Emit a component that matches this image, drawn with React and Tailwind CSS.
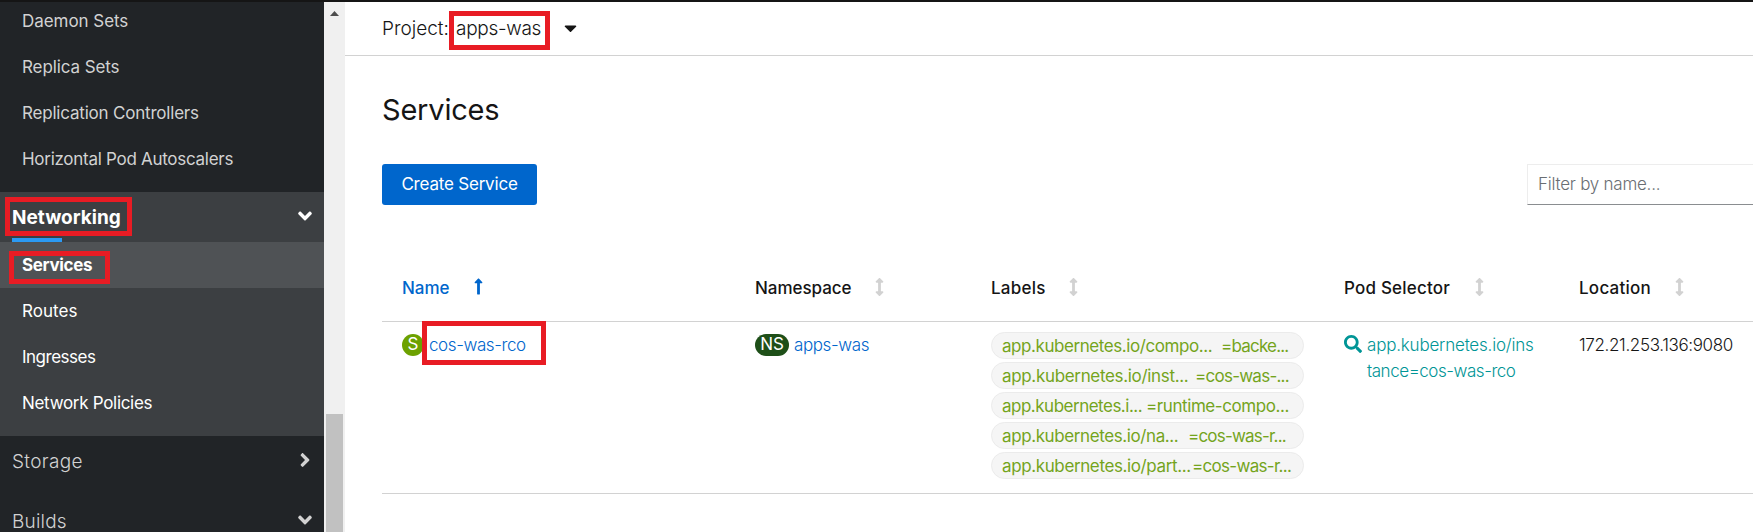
import React from "react";
import { FaAngleDown, FaAngleRight, FaArrowsAltV, FaCaretDown, FaLongArrowAltUp, FaSearch } from "react-icons/fa";

const highlight = "pointer-events-none absolute border-5 border-[#e81c24]";

function Sidebar() {
  return (
    <nav className="flex w-[324px] shrink-0 flex-col overflow-hidden bg-[#212427] text-[17px] text-[#d2d2d2]">
      <ul className="h-[190px] shrink-0 pl-[22px]">
        <li className="flex h-[42px] items-center pb-0.5 tracking-[-0.05px]">Daemon Sets</li>
        <li className="flex h-[46px] items-center pt-0.5 tracking-[-0.1px]">Replica Sets</li>
        <li className="flex h-[46px] items-center pt-0.5 tracking-[-0.2px]">Replication Controllers</li>
        <li className="flex h-[46px] items-center pt-0.5 tracking-[-0.28px]">Horizontal Pod Autoscalers</li>
      </ul>
      <section className="h-[244px] shrink-0 bg-[#3c3f42] text-white">
        <div className="relative flex h-[50px] items-center justify-between pr-3 pl-3 text-[19px] font-bold">
          <span className="pt-0.5">Networking</span>
          <FaAngleDown className="mb-0.5 h-[22px] w-[14px]" />
          <span className="absolute bottom-0 left-3 h-1 w-[50px] bg-[#2b9af3]" />
          <span className={`${highlight} top-[5px] left-[5px] h-[39px] w-[127px]`} />
        </div>
        <ul>
          <li className="relative flex h-[46px] items-center bg-[#4f5255] pt-0.5 pl-[22px] font-bold tracking-[-0.35px]">
            Services
            <span className={`${highlight} top-[9px] left-[9px] h-[33px] w-[101px]`} />
          </li>
          <li className="flex h-[46px] items-center pt-0.5 pl-[22px] tracking-[0.05px]">Routes</li>
          <li className="flex h-[46px] items-center pt-0.5 pl-[22px] tracking-[-0.5px]">Ingresses</li>
          <li className="flex h-[46px] items-center pt-0.5 pl-[22px] tracking-[-0.3px]">Network Policies</li>
        </ul>
      </section>
      <div className="flex h-[50px] shrink-0 items-center justify-between pr-3 pl-3 text-[19px] font-light">
        <span className="pt-0.5 tracking-[0.35px]">Storage</span>
        <FaAngleRight className="mb-0.5 h-[22px] w-[14px]" />
      </div>
      <div className="mt-2.5 flex h-[50px] shrink-0 items-center justify-between pr-3 pl-3 text-[19px] font-light">
        <span className="pt-0.5 tracking-[0.2px]">Builds</span>
        <FaAngleDown className="mb-0.5 h-[22px] w-[14px]" />
      </div>
    </nav>
  );
}

function Scrollbar() {
  return (
    <div className="flex w-[21px] shrink-0 flex-col items-center bg-[#f0f0f0] pt-[9px]">
      <svg className="h-[5px] w-[9px]" viewBox="0 0 9 5">
        <path d="M4.5 0 9 5H0z" fill="#4d4d4d" />
      </svg>
      <div className="mt-[398px] w-[17px] flex-1 bg-[#c1c1c1]" />
    </div>
  );
}

function SortIcon() {
  return <FaArrowsAltV className="mb-1 h-[18px] w-[9px] text-[#d2d2d2]" />;
}

const labels = [
  { k: "app.kubernetes.io/compo...", v: "=backe...", kc: "w-[219px] tracking-[-0.43px]", vc: "tracking-[-0.8px]" },
  { k: "app.kubernetes.io/inst...", v: "=cos-was-...", kc: "w-[193px] tracking-[-0.33px]", vc: "tracking-[-0.75px]" },
  { k: "app.kubernetes.i...", v: "=runtime-compo...", kc: "w-[144px] tracking-[-0.5px]", vc: "tracking-[-0.42px]" },
  { k: "app.kubernetes.io/na...", v: "=cos-was-r...", kc: "w-[186px] tracking-[-0.4px]", vc: "tracking-[-0.8px]" },
  { k: "app.kubernetes.io/part...", v: "=cos-was-r...", kc: "w-[190px] tracking-[-0.38px]", vc: "tracking-[-0.7px]" },
];

const columns = "grid grid-cols-[353px_236px_353px_235px_174px] pl-5";

function ServicesTable() {
  return (
    <div className="mt-[50px] text-[17px]">
      <div className={`${columns} h-[67px] border-b border-[#d2d2d2] pt-px font-medium text-[#151515]`}>
        <div className="flex items-center gap-[23px] text-[#0066cc]">
          <span className="w-[49px]">Name</span>
          <FaLongArrowAltUp className="mb-1 h-[19px] w-[9px]" />
        </div>
        <div className="flex items-center">
          <span className="w-[120px] tracking-[-0.05px]">Namespace</span>
          <SortIcon />
        </div>
        <div className="flex items-center">
          <span className="w-[78px] tracking-[0.25px]">Labels</span>
          <SortIcon />
        </div>
        <div className="flex items-center">
          <span className="w-[131px] tracking-[0.2px]">Pod Selector</span>
          <SortIcon />
        </div>
        <div className="flex items-center">
          <span className="w-[96px] tracking-[0.25px]">Location</span>
          <SortIcon />
        </div>
      </div>
      <div className={`${columns} relative h-[172px] border-b border-[#d2d2d2] pt-2.5`}>
        <div className="flex h-[26px] items-center">
          <span className="flex size-[22px] items-center justify-center rounded-full bg-[#6ca100] text-white">S</span>
          <a className="ml-[5px] pt-0.5 font-light tracking-[-0.4px] text-[#0066cc]">cos-was-rco</a>
          <span className={`${highlight} -top-px left-10 h-[44px] w-[124px]`} />
        </div>
        <div className="flex h-[26px] items-center">
          <span className="flex h-[22px] w-[34px] items-center justify-center rounded-full bg-[#1e4f18] text-white">NS</span>
          <a className="ml-[5px] pt-0.5 font-light tracking-[-0.4px] text-[#0066cc]">apps-was</a>
        </div>
        <div className="flex flex-col gap-[3px]">
          {labels.map((l) => (
            <div key={l.k} className="flex h-[27px] w-[313px] items-center rounded-full border border-[#ebebeb] bg-[#f5f5f5] pt-0.5 pl-2.5 whitespace-nowrap text-[#74a41c]">
              <span className={l.kc}>{l.k}</span>
              <span className={l.vc}>{l.v}</span>
            </div>
          ))}
        </div>
        <div className="flex items-start text-[#009596]">
          <FaSearch className="mt-[3px] mr-[5px] size-[18px]" />
          <a className="font-light leading-[26px]">
            <span className="block tracking-[-0.2px]">app.kubernetes.io/ins</span>
            <span className="block tracking-[-0.45px]">tance=cos-was-rco</span>
          </a>
        </div>
        <div className="h-[26px] leading-[26px] font-light tracking-[-0.36px] whitespace-nowrap text-[#151515]">172.21.253.136:9080</div>
      </div>
    </div>
  );
}

export default function App() {
  return (
    <div className="flex h-[532px] w-[1753px] flex-col overflow-hidden bg-white font-['Inter',sans-serif]">
      <div className="h-0.5 shrink-0 bg-[#151515]" />
      <div className="flex min-h-0 flex-1">
        <Sidebar />
        <Scrollbar />
        <main className="min-w-0 flex-1 overflow-hidden">
          <header className="relative flex h-[54px] items-center border-b border-[#d2d2d2] pl-[37px] text-[19px] font-light text-[#151515]">
            <span className="w-[74px] pt-0.5">Project:</span>
            <span className="w-[108px] pt-0.5 tracking-[-0.3px]">apps-was</span>
            <FaCaretDown className="mb-px h-5 w-[13px]" />
            <span className={`${highlight} top-[9px] left-[104px] h-[39px] w-[101px]`} />
          </header>
          <div className="pl-[37px]">
            <h1 className="mt-[34px] h-10 text-[29px] leading-10 tracking-[-0.2px] text-[#151515]">Services</h1>
            <div className="mt-[34px] flex justify-between">
              <button className="h-[41px] w-[155px] rounded-[3px] bg-[#0066cc] text-[17px] tracking-[-0.2px] text-white">Create Service</button>
              <div className="flex h-[41px] w-[226px] items-center border border-r-0 border-[#ededed] border-b-[#8a8d90] pl-2.5 text-[17px] font-light tracking-[-0.25px] text-[#6a6e73]">Filter by name...</div>
            </div>
            <ServicesTable />
          </div>
        </main>
      </div>
    </div>
  );
}
